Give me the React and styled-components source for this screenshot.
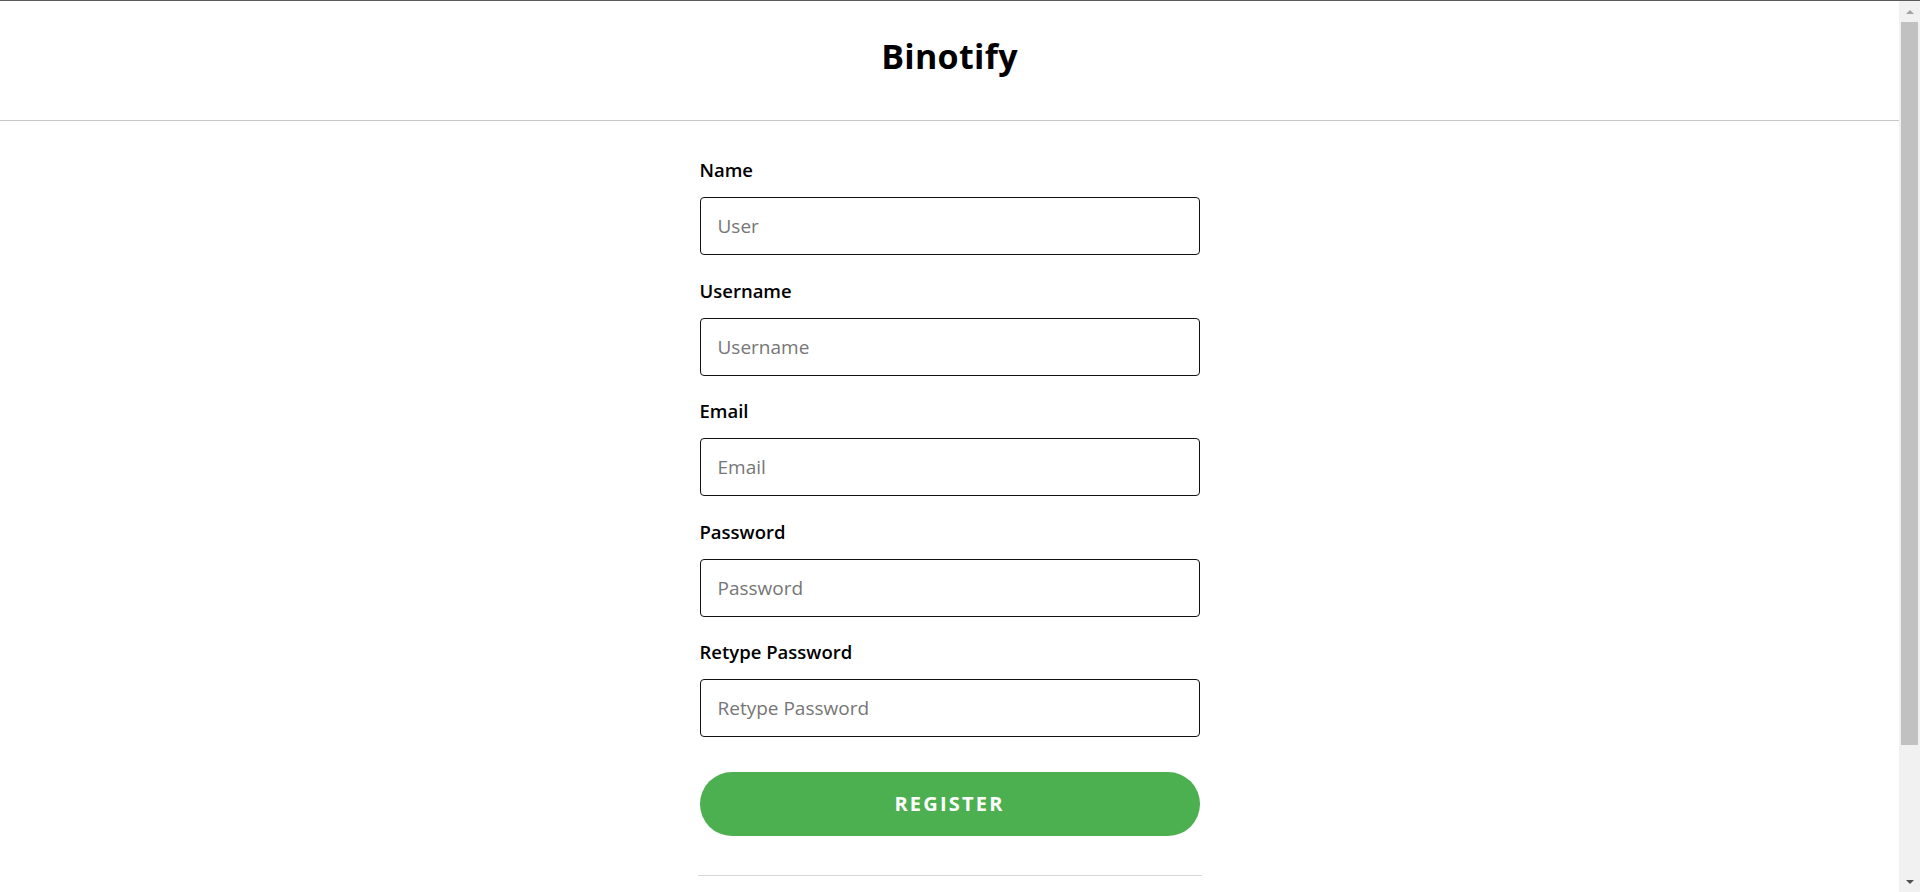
import React from "react";
import styled, { createGlobalStyle } from "styled-components";

const GlobalStyle = createGlobalStyle`
  html, body {
    margin: 0;
    padding: 0;
    background: #ffffff;
  }
  body {
    font-family: "Open Sans", Lato, "Liberation Sans", sans-serif;
    color: #000;
    border-top: 1px solid #5a5a5a;
    padding-right: 21px;
  }
  * { box-sizing: border-box; }
`;

const Header = styled.header`
  height: 120px;
  display: flex;
  align-items: center;
  justify-content: center;
  border-bottom: 1px solid #c8c8c8;
  padding-bottom: 9px;
`;

const Title = styled.h1`
  margin: 0;
  font-size: 34px;
  font-weight: 700;
  letter-spacing: 0.3px;
  line-height: 1;
`;

const Form = styled.form`
  width: 500px;
  margin: 0 auto;
  padding: 37px 0 180px;
  display: flex;
  flex-direction: column;
`;

const Field = styled.div`
  display: flex;
  flex-direction: column;
  margin-bottom: 23.5px;
`;

const Label = styled.label`
  font-size: 18.5px;
  line-height: 24px;
  font-weight: 600;
  margin-bottom: 15px;
`;

const Input = styled.input`
  height: 58px;
  width: 100%;
  border: 1px solid #111;
  border-radius: 4px;
  padding: 0 17px;
  font-family: inherit;
  font-size: 19px;
  color: #000;
  outline: none;
  &::placeholder {
    color: #767676;
  }
`;

const Button = styled.button`
  margin-top: 11px;
  height: 64px;
  width: 100%;
  border: none;
  border-radius: 32px;
  background: #4caf50;
  color: #fff;
  font-family: inherit;
  font-size: 20px;
  font-weight: 700;
  letter-spacing: 2.2px;
  cursor: pointer;
`;

const Divider = styled.hr`
  margin: 39px -2px 0;
  border: none;
  border-top: 1px solid #d9d9d9;
`;

/* Browser scrollbar of the reference, pinned to the viewport edge */
const ScrollBar = styled.aside`
  position: fixed;
  top: 1px;
  right: 0;
  bottom: 0;
  width: 21px;
  background: #f1f1f1;
  display: flex;
  flex-direction: column;
  align-items: center;
`;

const Arrow = styled.div`
  height: 21px;
  width: 100%;
  display: flex;
  align-items: center;
  justify-content: center;
  flex-shrink: 0;
  &::before {
    content: "";
    width: 0;
    height: 0;
    border-left: 4px solid transparent;
    border-right: 4px solid transparent;
    ${(p) =>
      p.$down
        ? `border-top: 4px solid ${p.$color};`
        : `border-bottom: 4px solid ${p.$color};`}
  }
`;

const Thumb = styled.div`
  width: 17px;
  height: 723px;
  background: #c1c1c1;
  flex-shrink: 0;
`;

const Spacer = styled.div`
  flex: 1;
`;

const fields = [
  { id: "name", label: "Name", placeholder: "User", type: "text" },
  { id: "username", label: "Username", placeholder: "Username", type: "text" },
  { id: "email", label: "Email", placeholder: "Email", type: "email" },
  { id: "password", label: "Password", placeholder: "Password", type: "password" },
  { id: "retype", label: "Retype Password", placeholder: "Retype Password", type: "password" },
];

export default function App() {
  return (
    <>
      <GlobalStyle />
      <Header>
        <Title>Binotify</Title>
      </Header>
      <Form onSubmit={(e) => e.preventDefault()}>
        {fields.map((f) => (
          <Field key={f.id}>
            <Label htmlFor={f.id}>{f.label}</Label>
            <Input id={f.id} type={f.type} placeholder={f.placeholder} />
          </Field>
        ))}
        <Button type="submit">REGISTER</Button>
        <Divider />
      </Form>
      <ScrollBar aria-hidden="true">
        <Arrow $color="#a3a3a3" />
        <Thumb />
        <Spacer />
        <Arrow $down $color="#505050" />
      </ScrollBar>
    </>
  );
}
